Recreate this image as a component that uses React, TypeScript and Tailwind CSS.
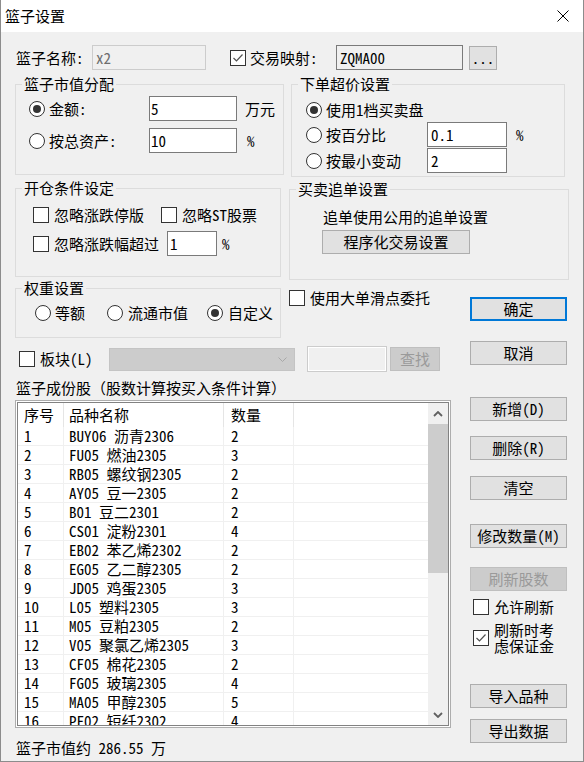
import React from "react";

const items = [
  ["1", "BUY06 沥青2306", "2"],
  ["2", "FU05 燃油2305", "3"],
  ["3", "RB05 螺纹钢2305", "2"],
  ["4", "AY05 豆一2305", "2"],
  ["5", "B01 豆二2301", "2"],
  ["6", "CS01 淀粉2301", "4"],
  ["7", "EB02 苯乙烯2302", "2"],
  ["8", "EG05 乙二醇2305", "2"],
  ["9", "JD05 鸡蛋2305", "3"],
  ["10", "L05 塑料2305", "3"],
  ["11", "M05 豆粕2305", "2"],
  ["12", "V05 聚氯乙烯2305", "3"],
  ["13", "CF05 棉花2305", "2"],
  ["14", "FG05 玻璃2305", "4"],
  ["15", "MA05 甲醇2305", "5"],
  ["16", "PF02 短纤2302", "4"],
];

const CheckBox = ({ checked = false }: { checked?: boolean }) => (
  <span className="w-[16px] h-[16px] shrink-0 border border-[#333333] bg-white flex items-center justify-center">
    {checked && (
      <svg width="12" height="10" viewBox="0 0 12 10">
        <path d="M1.5 5 L4.5 8 L10.5 1.5" fill="none" stroke="#505050" strokeWidth="1.2" />
      </svg>
    )}
  </span>
);

const Radio = ({ checked = false }: { checked?: boolean }) => (
  <span className="w-[16px] h-[16px] shrink-0 rounded-full border border-[#333333] bg-white flex items-center justify-center">
    {checked && <span className="w-[8px] h-[8px] rounded-full bg-[#333333]" />}
  </span>
);

const Group = ({
  title,
  className,
  children,
}: {
  title: string;
  className: string;
  children: React.ReactNode;
}) => (
  <fieldset className={`border border-[#dcdcdc] ${className}`}>
    <legend className="ml-[6px] px-[2px] leading-[16px]">{title}</legend>
    {children}
  </fieldset>
);

const Button = ({ label, className = "" }: { label: string; className?: string }) => (
  <div
    className={`h-[24px] bg-[#e1e1e1] border border-[#adadad] flex items-center justify-center ${className}`}
  >
    {label}
  </div>
);

const Chevron = ({ up }: { up?: boolean }) => (
  <svg width="10" height="6" viewBox="0 0 10 6">
    <path
      d={up ? "M1 5 L5 1 L9 5" : "M1 1 L5 5 L9 1"}
      fill="none"
      stroke="#606060"
      strokeWidth="1.8"
    />
  </svg>
);

export default function App() {
  return (
    <div className="w-[584px] h-[762px] overflow-hidden bg-[#f0f0f0] border-x border-b border-[#8c8c8c] font-['Noto_Sans_CJK_SC',sans-serif] [font-feature-settings:'hwid'] text-[15px] leading-[16px] text-black">
      {/* title bar */}
      <div className="h-[32px] bg-white flex items-center justify-between pl-[4px] pr-[14px]">
        <span>篮子设置</span>
        <svg width="12" height="12" viewBox="0 0 12 12">
          <path d="M0.5 0.5 L11.5 11.5 M11.5 0.5 L0.5 11.5" stroke="#000" strokeWidth="1" />
        </svg>
      </div>

      <div className="pl-[14px]">
        {/* name row */}
        <div className="mt-[13px] h-[25px] flex items-center">
          <span className="w-[77px] pl-[1px]">篮子名称:</span>
          <div className="w-[114px] h-[25px] border border-[#cccccc] bg-[#f0f0f0] pl-[3px] flex items-center text-[#6d6d6d]">
            x2
          </div>
          <div className="ml-[24px]">
            <CheckBox checked />
          </div>
          <span className="ml-[4px] w-[86px]">交易映射:</span>
          <div className="w-[127px] h-[25px] border border-[#7a7a7a] bg-[#f0f0f0] pl-[3px] flex items-center">
            ZQMA00
          </div>
          <Button label="..." className="ml-[6px] w-[28px]" />
        </div>

        {/* allocation + price */}
        <div className="mt-[6px] flex items-start">
          <Group title="篮子市值分配" className="w-[269px]">
            <div className="pl-[13px] pt-[4px] pb-[21px]">
              <div className="h-[25px] flex items-center">
                <div className="w-[120px] flex items-center">
                  <Radio checked />
                  <span className="ml-[4px]">金额:</span>
                </div>
                <div className="w-[88px] h-[25px] border border-[#7a7a7a] bg-white pl-[1px] flex items-center">5</div>
                <span className="ml-[8px]">万元</span>
              </div>
              <div className="mt-[7px] h-[25px] flex items-center">
                <div className="w-[120px] flex items-center">
                  <Radio />
                  <span className="ml-[4px]">按总资产:</span>
                </div>
                <div className="w-[88px] h-[25px] border border-[#7a7a7a] bg-white pl-[1px] flex items-center">10</div>
                <span className="ml-[10px]">%</span>
              </div>
            </div>
          </Group>
          <Group title="下单超价设置" className="ml-[7px] w-[274px]">
            <div className="pl-[14px] pt-[5px] pb-[3px]">
              <div className="h-[25px] flex items-center">
                <Radio checked />
                <span className="ml-[4px]">使用1档买卖盘</span>
              </div>
              <div className="h-[25px] flex items-center">
                <div className="w-[121px] flex items-center">
                  <Radio />
                  <span className="ml-[4px]">按百分比</span>
                </div>
                <div className="w-[80px] h-[25px] border border-[#7a7a7a] bg-white pl-[3px] flex items-center">0.1</div>
                <span className="ml-[9px]">%</span>
              </div>
              <div className="mt-[1px] h-[25px] flex items-center">
                <div className="w-[121px] flex items-center">
                  <Radio />
                  <span className="ml-[4px]">按最小变动</span>
                </div>
                <div className="w-[80px] h-[25px] border border-[#7a7a7a] bg-white pl-[3px] flex items-center">2</div>
              </div>
            </div>
          </Group>
        </div>

        {/* open conditions + chase orders */}
        <div className="mt-[3px] flex items-start">
          <Group title="开仓条件设定" className="w-[266px]">
            <div className="pl-[17px] pt-[6px] pb-[20px]">
              <div className="h-[25px] flex items-center">
                <div className="w-[128px] flex items-center">
                  <CheckBox />
                  <span className="ml-[5px]">忽略涨跌停版</span>
                </div>
                <CheckBox />
                <span className="ml-[5px]">忽略ST股票</span>
              </div>
              <div className="mt-[4px] h-[25px] flex items-center">
                <CheckBox />
                <span className="ml-[5px] w-[113px]">忽略涨跌幅超过</span>
                <div className="w-[50px] h-[25px] border border-[#7a7a7a] bg-white pl-[2px] flex items-center">1</div>
                <span className="ml-[5px]">%</span>
              </div>
            </div>
          </Group>
          <Group title="买卖追单设置" className="ml-[8px] mt-[1px] w-[280px]">
            <div className="pl-[32px] pt-[12px] pb-[25px]">
              <div className="pl-[1px]">追单使用公用的追单设置</div>
              <Button label="程序化交易设置" className="mt-[5px] w-[148px]" />
            </div>
          </Group>
        </div>

        {/* lower part */}
        <div className="flex items-start">
          <div className="w-[436px]">
            <div className="flex items-start">
              <Group title="权重设置" className="w-[266px]">
                <div className="pl-[19px] pt-[9px] pb-[16px] h-[41px] flex items-center">
                  <div className="w-[72px] flex items-center">
                    <Radio />
                    <span className="ml-[4px]">等额</span>
                  </div>
                  <div className="w-[100px] flex items-center">
                    <Radio />
                    <span className="ml-[5px]">流通市值</span>
                  </div>
                  <Radio checked />
                  <span className="ml-[5px]">自定义</span>
                </div>
              </Group>
              <div className="ml-[8px] mt-[10px] flex items-center">
                <CheckBox />
                <span className="ml-[5px]">使用大单滑点委托</span>
              </div>
            </div>

            <div className="mt-[8px] h-[26px] flex items-center">
              <div className="ml-[4px]">
                <CheckBox />
              </div>
              <span className="ml-[5px] w-[69px]">板块(L)</span>
              <div className="w-[186px] h-[23px] bg-[#cccccc] border border-[#c4c4c4] flex items-center justify-end pr-[7px]">
                <svg width="9" height="5" viewBox="0 0 9 5">
                  <path d="M0.5 0.5 L4.5 4.5 L8.5 0.5" fill="none" stroke="#a8a8a8" strokeWidth="1" />
                </svg>
              </div>
              <div className="ml-[12px] w-[80px] h-[26px] border border-[#cccccc] bg-[#f0f0f0] shadow-[inset_0_0_0_1px_#ffffff]" />
              <div className="ml-[3px] w-[50px] h-[24px] bg-[#cccccc] border border-[#bfbfbf] text-[#9a9a9a] flex items-center justify-center">
                查找
              </div>
            </div>

            <div className="mt-[8px] pl-[1px] [font-feature-settings:normal]">
              篮子成份股（股数计算按买入条件计算）
            </div>

            <div className="mt-[4px] h-[328px] border border-[#adadad] bg-white p-[1px]">
              <div className="h-full border border-[#828282] flex">
                <div className="flex-1 overflow-hidden">
                  <div className="h-[24px] flex">
                    <div className="w-[46px] pl-[6px] border-r border-[#e5e5e5] flex items-center">序号</div>
                    <div className="w-[160px] pl-[5px] border-r border-[#e5e5e5] flex items-center">品种名称</div>
                    <div className="w-[70px] pl-[7px] border-r border-[#e5e5e5] flex items-center">数量</div>
                    <div className="flex-1" />
                  </div>
                  {items.map(([no, name, qty]) => (
                    <div key={no} className="h-[19px] flex border-b border-[#f0f0f0]">
                      <div className="w-[46px] pl-[6px] border-r border-[#f0f0f0] flex items-center">{no}</div>
                      <div className="w-[160px] pl-[5px] border-r border-[#f0f0f0] flex items-center whitespace-nowrap">{name}</div>
                      <div className="w-[70px] pl-[7px] border-r border-[#f0f0f0] flex items-center">{qty}</div>
                      <div className="flex-1" />
                    </div>
                  ))}
                </div>
                <div className="w-[20px] bg-[#f0f0f0] flex flex-col">
                  <div className="h-[21px] flex items-center justify-center">
                    <Chevron up />
                  </div>
                  <div className="h-[149px] bg-[#cdcdcd]" />
                  <div className="flex-1" />
                  <div className="h-[21px] flex items-center justify-center">
                    <Chevron />
                  </div>
                </div>
              </div>
            </div>

            <div className="mt-[12px] pl-[1px]">篮子市值约 286.55 万</div>
          </div>

          {/* right buttons */}
          <div className="ml-[19px] w-[97px] flex flex-col">
            <div className="mt-[17px] h-[24px] bg-[#e1e1e1] border-2 border-[#0078d7] flex items-center justify-center">
              确定
            </div>
            <Button label="取消" className="mt-[20px]" />
            <Button label="新增(D)" className="mt-[32px]" />
            <Button label="删除(R)" className="mt-[15px]" />
            <Button label="清空" className="mt-[16px]" />
            <Button label="修改数量(M)" className="mt-[24px]" />
            <div className="mt-[19px] h-[24px] bg-[#cccccc] border border-[#bfbfbf] text-[#9a9a9a] flex items-center justify-center">
              刷新股数
            </div>
            <div className="mt-[8px] ml-[3px] flex items-center">
              <CheckBox />
              <span className="ml-[5px]">允许刷新</span>
            </div>
            <div className="mt-[7px] ml-[3px] flex items-center">
              <CheckBox checked />
              <span className="ml-[5px] leading-[16px]">
                刷新时考
                <br />
                虑保证金
              </span>
            </div>
            <Button label="导入品种" className="mt-[30px]" />
            <Button label="导出数据" className="mt-[11px]" />
          </div>
        </div>
      </div>
    </div>
  );
}
